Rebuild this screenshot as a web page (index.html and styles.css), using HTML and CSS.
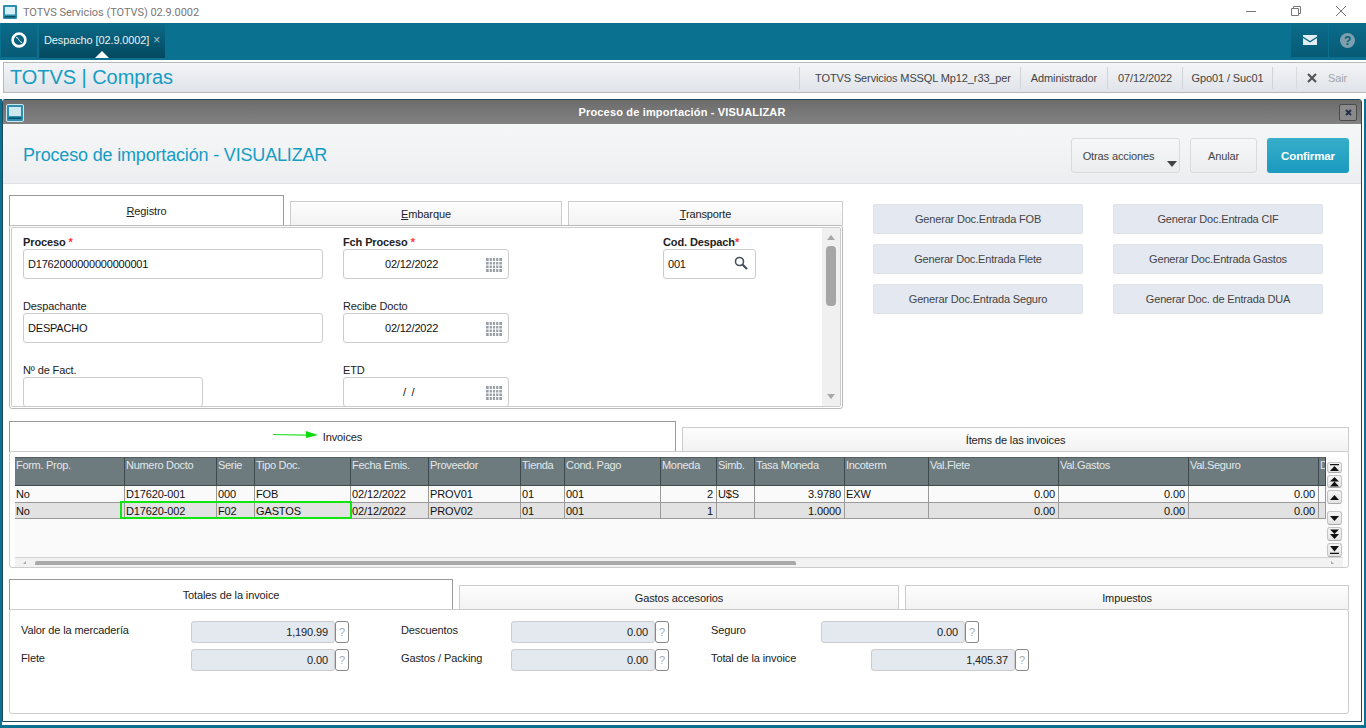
FILE: index.html
```html
<!DOCTYPE html>
<html lang="es">
<head>
<meta charset="utf-8">
<title>TOTVS Servicios (TOTVS) 02.9.0002</title>
<link rel="stylesheet" href="styles.css">
</head>
<body>
<div class="app">
  <header class="titlebar">
    <svg class="win-icon" width="14" height="14" viewBox="0 0 14 14"><rect width="14" height="14" rx="1" fill="#2a8fb0"/><rect x="2" y="2" width="10" height="7.5" fill="#d6eef5"/><path d="M1.5 11h11v1.5h-11z" fill="#0b4f66"/></svg>
    <span class="win-title">TOTVS Servicios (TOTVS) 02.9.0002</span>
    <div class="win-controls">
      <svg width="10" height="10" viewBox="0 0 10 10"><path d="M0 5.5h10" stroke="#777" fill="none"/></svg>
      <svg width="10" height="10" viewBox="0 0 10 10"><path d="M.5 2.5h7v7h-7zM2.5 2.5v-2h7v7h-2" stroke="#777" fill="none"/></svg>
      <svg width="10" height="10" viewBox="0 0 10 10"><path d="M0 0l10 10M10 0L0 10" stroke="#777" fill="none"/></svg>
    </div>
  </header>

  <nav class="appbar">
    <div class="logo-cell">
      <svg width="16" height="16" viewBox="0 0 16 16"><circle cx="8" cy="8" r="6.4" fill="none" stroke="#fff" stroke-width="2.6"/><path d="M5 5.6c2.200-.4 2.200 1.600 3 2.400s1.400 2.600 3 2.400" stroke="#fff" stroke-width="1" fill="none"/></svg>
    </div>
    <div class="app-tab">
      <span>Despacho [02.9.0002]</span><span class="tab-x">×</span>
      <i class="tab-caret"></i>
    </div>
    <div class="appbar-right">
      <div class="app-cell">
        <svg width="14" height="10" viewBox="0 0 14 10"><path d="M0 0h14v1.500L7 6 0 1.500z" fill="#e4eef2"/><path d="M0 3l7 4.500L14 3v7H0z" fill="#e4eef2"/></svg>
      </div>
      <div class="app-cell">
        <svg width="15" height="15" viewBox="0 0 15 15"><circle cx="7.500" cy="7.500" r="7.500" fill="#7d9fae"/><text x="7.500" y="12" text-anchor="middle" class="help-q">?</text></svg>
      </div>
    </div>
  </nav>

  <div class="modulebar">
    <div class="module-name">TOTVS | Compras</div>
    <div class="module-info">
      <span class="info-cell info-db">TOTVS Servicios MSSQL Mp12_r33_per</span>
      <span class="info-cell info-user">Administrador</span>
      <span class="info-cell info-date">07/12/2022</span>
      <span class="info-cell info-branch">Gpo01 / Suc01</span>
      <span class="info-exit">
        <svg width="10" height="10" viewBox="0 0 10 10"><path d="M1 1l8 8M9 1L1 9" stroke="#555" stroke-width="2.200" fill="none"/></svg>
        <span>Sair</span>
      </span>
    </div>
  </div>

  <div class="workspace">
    <section class="dialog">
      <div class="dialog-bar">
        <svg class="dialog-icon" width="18" height="18" viewBox="0 0 18 18"><rect x=".5" y=".5" width="17" height="17" rx="1.500" fill="#2a8fb0" stroke="#cfe3ea"/><rect x="3" y="3" width="12" height="9" fill="#cfe8f0"/><path d="M2.500 13.500h13V15h-13z" fill="#0b4f66"/></svg>
        <span>Proceso de importación - VISUALIZAR</span>
        <button class="dialog-close" type="button">
          <svg width="7" height="7" viewBox="0 0 7 7"><path d="M1 1l5 5M6 1L1 6" stroke="#22304a" stroke-width="2" fill="none"/></svg>
        </button>
      </div>

      <div class="dialog-head">
        <h1>Proceso de importación - VISUALIZAR</h1>
        <div class="head-actions">
          <button class="btn btn-more" type="button">Otras acciones<i class="more-caret"></i></button>
          <button class="btn btn-cancel" type="button">Anular</button>
          <button class="btn btn-primary" type="button">Confirmar</button>
        </div>
      </div>

      <div class="dialog-body">
        <div class="top-row">
          <div class="tabset tabset-form">
            <div class="tabs">
              <div class="tab active t-reg"><span><u>R</u>egistro</span></div>
              <div class="tab t-emb"><span><u>E</u>mbarque</span></div>
              <div class="tab t-tra"><span><u>T</u>ransporte</span></div>
            </div>
            <div class="panel panel-form">
              <div class="panel-inner">
                <div class="form-grid">
                  <div class="field">
                    <label class="req">Proceso <em>*</em></label>
                    <div class="input w-300">D1762000000000000001</div>
                  </div>
                  <div class="field">
                    <label class="req">Fch Proceso <em>*</em></label>
                    <div class="input w-166 date">02/12/2022
                      <svg class="cal" width="16" height="14" viewBox="0 0 16 14"><path d="M0 0h16v14H0z" fill="#9aa0a8"/><path d="M0 3.500h16M0 7h16M0 10.500h16M3.200 0v14M6.400 0v14M9.600 0v14M12.800 0v14" stroke="#fff" fill="none"/></svg>
                    </div>
                  </div>
                  <div class="field">
                    <label class="req">Cod. Despach<em>*</em></label>
                    <div class="input w-93">001
                      <svg class="search" width="14" height="14" viewBox="0 0 14 14"><circle cx="5.500" cy="5.500" r="4" fill="none" stroke="#46505c" stroke-width="1.600"/><path d="M8.500 8.500l4.500 4.500" stroke="#46505c" stroke-width="2.200" fill="none"/></svg>
                    </div>
                  </div>
                  <div class="field">
                    <label>Despachante</label>
                    <div class="input w-300">DESPACHO</div>
                  </div>
                  <div class="field">
                    <label>Recibe Docto</label>
                    <div class="input w-166 date">02/12/2022
                      <svg class="cal" width="16" height="14" viewBox="0 0 16 14"><path d="M0 0h16v14H0z" fill="#9aa0a8"/><path d="M0 3.500h16M0 7h16M0 10.500h16M3.200 0v14M6.400 0v14M9.600 0v14M12.800 0v14" stroke="#fff" fill="none"/></svg>
                    </div>
                  </div>
                  <div class="field field-empty"></div>
                  <div class="field">
                    <label>Nº de Fact.</label>
                    <div class="input w-180"></div>
                  </div>
                  <div class="field">
                    <label>ETD</label>
                    <div class="input w-166 date date-empty">/ &nbsp;/
                      <svg class="cal" width="16" height="14" viewBox="0 0 16 14"><path d="M0 0h16v14H0z" fill="#9aa0a8"/><path d="M0 3.500h16M0 7h16M0 10.500h16M3.200 0v14M6.400 0v14M9.600 0v14M12.800 0v14" stroke="#fff" fill="none"/></svg>
                    </div>
                  </div>
                </div>
                <div class="vscroll">
                  <i class="arrow-up"></i>
                  <div class="vscroll-track"><div class="vscroll-thumb"></div></div>
                  <i class="arrow-down"></i>
                </div>
              </div>
            </div>
          </div>

          <div class="gen-buttons">
            <button type="button">Generar Doc.Entrada FOB</button>
            <button type="button">Generar Doc.Entrada CIF</button>
            <button type="button">Generar Doc.Entrada Flete</button>
            <button type="button">Generar Doc.Entrada Gastos</button>
            <button type="button">Generar Doc.Entrada Seguro</button>
            <button type="button">Generar Doc. de Entrada DUA</button>
          </div>
        </div>

        <div class="tabset tabset-grid">
          <div class="tabs">
            <div class="tab active t-half"><span>Invoices</span>
              <svg class="note-arrow" width="46" height="10" viewBox="0 0 46 10"><path d="M0 4.500l34 .6" stroke="#1fe01f" stroke-width="1.200" fill="none"/><path d="M33 1l12 4-12 3z" fill="#0bdc0b"/></svg>
            </div>
            <div class="tab t-half"><span>Ítems de las invoices</span></div>
          </div>
          <div class="panel panel-grid">
            <div class="grid-row">
              <div class="grid-wrap">
                <table class="data">
                  <colgroup>
                    <col class="c110"><col class="c92"><col class="c38"><col class="c96"><col class="c78"><col class="c92"><col class="c44"><col class="c96"><col class="c56"><col class="c38"><col class="c90"><col class="c84"><col class="c130"><col class="c130"><col class="c130"><col class="c7">
                  </colgroup>
                  <thead>
                    <tr><th>Form. Prop.</th><th>Numero Docto</th><th>Serie</th><th>Tipo Doc.</th><th>Fecha Emis.</th><th>Proveedor</th><th>Tienda</th><th>Cond. Pago</th><th>Moneda</th><th>Simb.</th><th>Tasa Moneda</th><th>Incoterm</th><th>Val.Flete</th><th>Val.Gastos</th><th>Val.Seguro</th><th>D</th></tr>
                  </thead>
                  <tbody>
                    <tr><td>No</td><td>D17620-001</td><td>000</td><td>FOB</td><td>02/12/2022</td><td>PROV01</td><td>01</td><td>001</td><td class="num">2</td><td>U$S</td><td class="num">3.9780</td><td>EXW</td><td class="num">0.00</td><td class="num">0.00</td><td class="num">0.00</td><td></td></tr>
                    <tr class="selected"><td>No</td><td>D17620-002</td><td>F02</td><td>GASTOS</td><td>02/12/2022</td><td>PROV02</td><td>01</td><td>001</td><td class="num">1</td><td></td><td class="num">1.0000</td><td></td><td class="num">0.00</td><td class="num">0.00</td><td class="num">0.00</td><td></td></tr>
                  </tbody>
                </table>
                <div class="green-box"></div>
              </div>
              <div class="grid-nav">
                <button type="button" class="nav-first"><svg width="9" height="7" viewBox="0 0 9 7"><path d="M0 0h9v1.200H0zM4.500 2L9 7H0z" fill="#111"/></svg></button>
                <button type="button" class="nav-second"><svg width="9" height="10" viewBox="0 0 9 10"><path d="M4.500 0L9 4.500H0zM4.500 4.500L9 9.500H0z" fill="#111"/></svg></button>
                <button type="button" class="nav-gap"><svg width="9" height="5" viewBox="0 0 9 5"><path d="M4.500 0L9 5H0z" fill="#111"/></svg></button>
                <button type="button"><svg width="9" height="5" viewBox="0 0 9 5"><path d="M0 0h9L4.500 5z" fill="#111"/></svg></button>
                <button type="button"><svg width="9" height="10" viewBox="0 0 9 10"><path d="M0 .5h9L4.500 5zM0 5h9L4.500 10z" fill="#111"/></svg></button>
                <button type="button"><svg width="9" height="8" viewBox="0 0 9 8"><path d="M0 0h9L4.500 5.500zM0 6.800h9V8H0z" fill="#111"/></svg></button>
              </div>
            </div>
            <div class="hscroll">
              <i class="hs-left"></i>
              <div class="hscroll-thumb"></div>
              <i class="hs-right"></i>
            </div>
          </div>
        </div>

        <div class="tabset tabset-totals">
          <div class="tabs">
            <div class="tab active t-tot"><span>Totales de la invoice</span></div>
            <div class="tab t-gas"><span>Gastos accesorios</span></div>
            <div class="tab t-imp"><span>Impuestos</span></div>
          </div>
          <div class="panel panel-totals">
            <div class="tot-col tot-a">
              <div class="tot-row"><label>Valor de la mercadería</label><div class="amount">1,190.99</div><span class="hint">?</span></div>
              <div class="tot-row"><label>Flete</label><div class="amount">0.00</div><span class="hint">?</span></div>
            </div>
            <div class="tot-col tot-b">
              <div class="tot-row"><label>Descuentos</label><div class="amount">0.00</div><span class="hint">?</span></div>
              <div class="tot-row"><label>Gastos / Packing</label><div class="amount">0.00</div><span class="hint">?</span></div>
            </div>
            <div class="tot-col tot-c">
              <div class="tot-row"><label>Seguro</label><div class="amount">0.00</div><span class="hint">?</span></div>
              <div class="tot-row tot-wide"><label>Total de la invoice</label><div class="amount">1,405.37</div><span class="hint">?</span></div>
            </div>
          </div>
        </div>
      </div>
    </section>
  </div>
</div>
</body>
</html>
```

FILE: styles.css
```css
* { box-sizing: border-box; }
html, body { margin: 0; height: 100%; overflow: hidden; }
body { font: 11px/14px "Liberation Sans", Arial, sans-serif; letter-spacing: -.12px; color: #222; background: #fff; }
button { font: inherit; letter-spacing: inherit; cursor: default; }
.app { width: 1366px; height: 728px; display: flex; flex-direction: column; overflow: hidden; }

/* window title */
.titlebar { height: 23px; display: flex; align-items: center; padding: 1px 0 0 3px; background: #fff; }
.win-title { margin-left: 6px; font: 11px Roboto, "Noto Sans", sans-serif; letter-spacing: -.04px; color: #777; }
.win-controls { margin-left: auto; display: flex; gap: 35px; padding: 0 20px 3px 0; }

/* app bar */
.appbar { height: 37px; display: flex; background: #0b7190; padding-left: 1px; }
.logo-cell { width: 36px; height: 34px; display: flex; align-items: center; justify-content: center; background: linear-gradient(#0b6c8a, #075a75); }
.app-tab { position: relative; width: 126px; height: 35px; margin-left: 2px; padding: 10px 0 0 5px; color: #e8f2f5; font-size: 11px; background: linear-gradient(#0b6c8a, #04485f); }
.tab-x { margin-left: 4px; color: #a8c4ce; font-size: 12px; }
.tab-caret { position: absolute; left: 56px; bottom: 0; border: 7px solid transparent; border-top: 0; border-bottom-color: #fff; }
.appbar-right { margin-left: auto; display: flex; gap: 1px; }
.app-cell { width: 37px; height: 34px; display: flex; align-items: center; justify-content: center; background: linear-gradient(#0b6c8a, #075a75); }
.help-q { font: bold 12px "Liberation Sans", sans-serif; fill: #0b5c76; }

/* module bar */
.modulebar { height: 31px; margin: 2px 0 6px 3px; display: flex; align-items: center; justify-content: space-between; background: linear-gradient(#f3f5f7, #e0e3e8); border: 1px solid #b5b8bb; border-right: 0; }
.module-name { padding: 0 0 2px 6px; font-size: 20px; line-height: 24px; letter-spacing: -.05px; color: #169cc4; }
.module-info { display: flex; align-items: center; height: 22px; color: #444; }
.info-cell { height: 100%; display: flex; align-items: center; justify-content: center; border-left: 1px solid #d0d3d8; }
.info-db { width: 221px; padding-left: 6px; }
.info-user { width: 87px; }
.info-date { width: 75px; }
.info-branch { width: 91px; border-right: 1px solid #d0d3d8; }
.info-exit { width: 70px; height: 100%; margin-left: 23px; padding-left: 10px; display: flex; align-items: center; gap: 11px; color: #a0a5aa; border-left: 1px solid #d8dade; }

/* dialog */
.workspace { flex: 1; min-height: 0; padding: 0 2px 3px 0; background: #fff; border: solid #0b7190; border-width: 0 2px 3px 2px; }
.dialog { height: 100%; display: flex; flex-direction: column; background: #fff; border: 1px solid #1e4a5e; border-radius: 3px 3px 0 0; }
.dialog-bar { position: relative; height: 24px; flex: none; display: flex; align-items: center; justify-content: center; letter-spacing: .17px; color: #fff; font-weight: bold; background: linear-gradient(#6c6c6c, #828282); }
.dialog-icon { position: absolute; left: 3px; top: 4px; }
.dialog-close { position: absolute; right: 4px; top: 4px; width: 18px; height: 17px; padding: 0; display: flex; align-items: center; justify-content: center; background: #8a8a8a; border: 1px solid #4a4a4a; border-radius: 2px; }
.dialog-head { height: 60px; flex: none; display: flex; align-items: center; justify-content: space-between; padding: 0 12px 0 20px; background: linear-gradient(#f5f7f7, #eceef1); border-bottom: 1px solid #dfe1e4; }
.dialog-head h1 { margin: 2px 0 0; font-size: 18px; font-weight: normal; line-height: 22px; letter-spacing: -.17px; color: #169cc4; }
.head-actions { display: flex; gap: 10px; padding-top: 3px; }
.btn { height: 35px; padding-top: 2px; border-radius: 3px; border: 1px solid #d8dadd; background: linear-gradient(#f6f7f7, #ebedef); color: #444; }
.btn-more { position: relative; width: 109px; padding: 2px 14px 0 0; }
.btn-cancel { width: 67px; }
.btn-primary { width: 82px; color: #fff; font-weight: bold; font-size: 11.5px; border: 0; background: linear-gradient(#37aec9, #1a9abf); }
.more-caret { position: absolute; right: 2px; bottom: 5px; border: 5px solid transparent; border-bottom: 0; border-top: 6px solid #444; }
.dialog-body { flex: 1; min-height: 0; padding: 11px 0 0 6px; display: flex; flex-direction: column; overflow: hidden; }

/* tabs */
.tabs { display: flex; align-items: flex-end; gap: 6px; height: 31px; }
.tab { position: relative; height: 25px; display: flex; align-items: center; justify-content: center; background: linear-gradient(#fdfdfd, #f2f2f2); border: 1px solid #ccc; border-bottom: 0; }
.tab.active { height: 31px; background: #fff; border-color: #999; }
.t-reg { width: 275px; }
.t-emb { width: 272px; }
.t-tra { width: 275px; }
.t-half { width: 667px; }
.t-tot { width: 444px; }
.t-gas { width: 440px; }
.t-imp { width: 444px; }
.panel { position: relative; margin-top: -1px; background: #fff; border: 1px solid #ccc; border-radius: 3px; }

/* form panel */
.top-row { display: flex; height: 226px; flex: none; }
.tabset-form { width: 834px; flex: none; }
.panel-form { height: 184px; padding: 1px; border-color: #bbb; }
.panel-inner { height: 100%; display: flex; border: 1px solid #ccc; border-radius: 2px; overflow: hidden; }
.form-grid { flex: 1; display: grid; grid-template-columns: 320px 320px 1fr; grid-auto-rows: 44px; row-gap: 20px; padding: 7px 0 0 11px; overflow: hidden; }
.field label { display: block; height: 14px; line-height: 14px; color: #222; }
.field .req { font-weight: bold; }
.field em { font-style: normal; color: #f33; }
.input { position: relative; height: 30px; line-height: 28px; padding-left: 4px; letter-spacing: -.2px; background: #fff; border: 1px solid #ccc; border-radius: 3px; color: #111; }
.w-300 { width: 300px; }
.w-180 { width: 180px; }
.w-166 { width: 166px; }
.w-93 { width: 93px; }
.date { padding-left: 41px; }
.date-empty { padding-left: 59px; }
.cal { position: absolute; right: 6px; top: 8px; }
.search { position: absolute; right: 7px; top: 6px; }
.vscroll { width: 18px; display: flex; flex-direction: column; align-items: center; background: #f0f0f0; }
.arrow-up { margin-top: 7px; border: 4px solid transparent; border-top: 0; border-bottom: 5px solid #a8a8a8; }
.arrow-down { margin-bottom: 7px; border: 4px solid transparent; border-bottom: 0; border-top: 5px solid #a8a8a8; }
.vscroll-track { flex: 1; width: 100%; padding: 6px 4px 0; }
.vscroll-thumb { height: 60px; background: #a6a6a6; border-radius: 4px; }
.gen-buttons { margin: 9px 0 0 30px; display: grid; grid-template-columns: 210px 210px; grid-auto-rows: 30px; column-gap: 30px; row-gap: 10px; align-content: start; }
.gen-buttons button { padding: 0; letter-spacing: -.18px; color: #444; background: #e4e8f0; border: 1px solid #dde1e9; border-radius: 2px; }

/* data grid */
.tabset-grid { width: 1340px; flex: none; }
.note-arrow { position: absolute; left: 263px; top: 8px; }
.panel-grid { height: 117px; padding: 5px 5px 0; }
.grid-row { display: flex; height: 101px; border-bottom: 1px solid #d4d4d4; background: #fafafa; }
.grid-wrap { position: relative; width: 1311px; overflow: hidden; }
.data { width: 1311px; table-layout: fixed; border-collapse: separate; border-spacing: 0; }
.c110 { width: 110px; } .c92 { width: 92px; } .c38 { width: 38px; } .c96 { width: 96px; }
.c78 { width: 78px; } .c44 { width: 44px; } .c56 { width: 56px; } .c90 { width: 90px; }
.c84 { width: 84px; } .c130 { width: 130px; } .c7 { width: 7px; }
.data th { height: 29px; padding: 0 0 0 1px; text-align: left; vertical-align: top; font-weight: normal; letter-spacing: -.3px; color: #e2e8ea; background: #6e7b7e; border-top: 1px solid #555f63; border-bottom: 1px solid #40494c; border-right: 1px solid #3f484b; white-space: nowrap; overflow: hidden; }
.data td { height: 17px; padding: 0 2px 0 1px; line-height: 15px; color: #111; background: #fafafa; border-bottom: 1px solid #9a9a9a; border-right: 1px solid #9a9a9a; white-space: nowrap; overflow: hidden; }
.data .selected td { height: 16px; padding-top: 1px; line-height: 14px; background: #e2e2e2; }
.data .num { text-align: right; padding-right: 3px; }
.green-box { position: absolute; left: 105px; top: 44px; width: 232px; height: 18px; border: 2px solid #0ee60e; }
.grid-nav { width: 17px; padding: 5px 0 0 1px; display: flex; flex-direction: column; gap: 2px; background: #fafafa; }
.grid-nav button { width: 15px; height: 14px; padding: 0; flex: none; display: flex; align-items: center; justify-content: center; background: linear-gradient(#f4f4f4, #e4e4e4); border: 1px solid #c4c4c4; border-bottom-color: #a8a8a8; border-radius: 3px; }
.grid-nav .nav-first { height: 11px; }
.grid-nav .nav-second { height: 13px; }
.grid-nav .nav-gap { margin-bottom: 5px; }
.hscroll { height: 9px; display: flex; align-items: flex-start; background: #f2f2f2; }
.hs-left { margin: 3px 0 0 8px; border: solid transparent; border-width: 0 0 3px 3px; border-bottom-color: #aaa; }
.hscroll-thumb { width: 761px; height: 4px; margin: 3px 0 0 9px; background: #a9a9a9; border-radius: 2px 2px 0 0; }
.hs-right { margin: 3px 0 0 535px; border: solid transparent; border-width: 0 3px 3px 0; border-bottom-color: #aaa; }

/* totals */
.tabset-totals { width: 1340px; margin-top: 11px; flex: none; }
.panel-totals { height: 105px; padding: 11px 0 0 11px; display: flex; }
.tot-col { display: flex; flex-direction: column; gap: 6px; }
.tot-a { width: 380px; }
.tot-b { width: 310px; }
.tot-a label { width: 170px; }
.tot-b label, .tot-c label { width: 110px; }
.tot-c .tot-wide label { width: 160px; }
.tot-row { display: flex; height: 22px; }
.tot-row label { flex: none; line-height: 18px; color: #222; }
.amount { width: 144px; height: 22px; padding-right: 6px; line-height: 20px; text-align: right; color: #222; background: #e4e8ef; border: 1px solid #ccc; border-radius: 3px; }
.hint { width: 14px; height: 22px; line-height: 20px; text-align: center; color: #aaa; background: #fff; border: 1px solid #888; border-radius: 3px; }
```
